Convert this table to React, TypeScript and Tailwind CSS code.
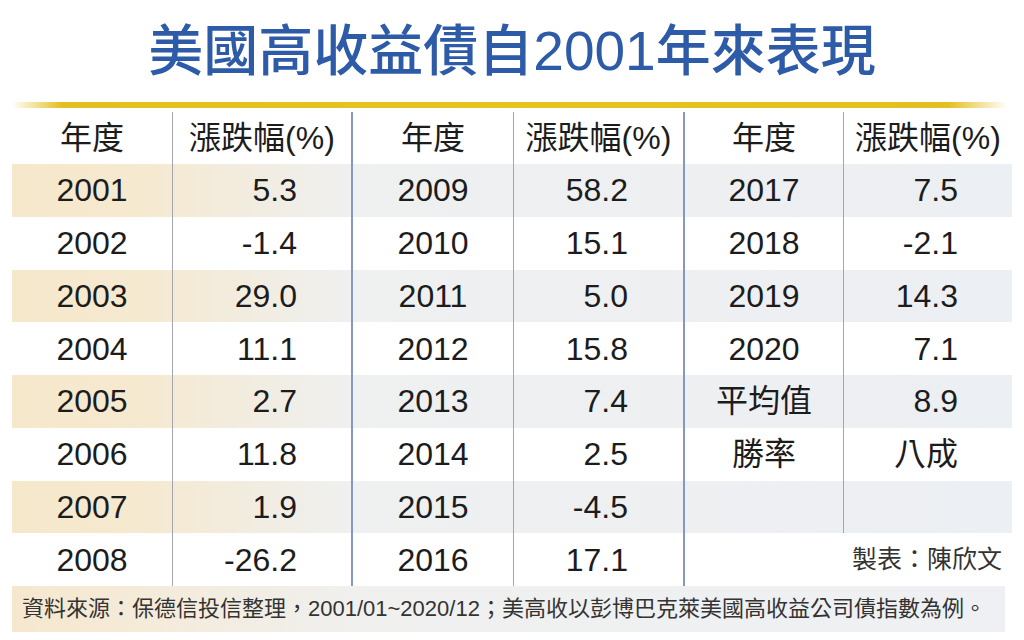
import React from 'react';

const fontStack = "font-['Liberation_Sans','Noto_Sans_CJK_TC',sans-serif]";

const bodyCols = [
  'w-[160px] justify-center',
  'w-[179px] justify-end pr-[54px] border-l border-[#a3a6ad]',
  'w-[162px] justify-center border-l-2 border-[#8597c6]',
  'w-[170px] justify-end pr-[55px] border-l border-[#a3a6ad]',
  'w-[160px] justify-center border-l-2 border-[#8597c6]',
  'w-[169px] justify-end pr-[54px] border-l border-[#a3a6ad]',
];

const headCols = [
  'w-[160px]',
  'w-[179px] border-l border-[#a3a6ad]',
  'w-[162px] border-l-2 border-[#8597c6]',
  'w-[170px] border-l border-[#a3a6ad]',
  'w-[160px] border-l-2 border-[#8597c6]',
  'w-[169px] border-l border-[#a3a6ad]',
];

const rows: string[][] = [
  ['2001', '5.3', '2009', '58.2', '2017', '7.5'],
  ['2002', '-1.4', '2010', '15.1', '2018', '-2.1'],
  ['2003', '29.0', '2011', '5.0', '2019', '14.3'],
  ['2004', '11.1', '2012', '15.8', '2020', '7.1'],
  ['2005', '2.7', '2013', '7.4', '平均值', '8.9'],
  ['2006', '11.8', '2014', '2.5', '勝率', '八成'],
  ['2007', '1.9', '2015', '-4.5', '', ''],
  ['2008', '-26.2', '2016', '17.1'],
];

const headers = ['年度', '漲跌幅(%)', '年度', '漲跌幅(%)', '年度', '漲跌幅(%)'];

export default function App() {
  return (
    <div className={`w-[1024px] h-[640px] bg-white overflow-hidden ${fontStack}`}>
      {/* title */}
      <div className="h-[102px] flex items-center justify-center">
        <h1 className="text-[55px] leading-none font-medium text-[#2e5ba8]">
          美國高收益債自2001年來表現
        </h1>
      </div>

      <div className="ml-[12px] mr-[16px] h-[6px] bg-[linear-gradient(to_right,rgba(230,195,30,0)_0%,#e3c021_5%,#e6c31d_50%,#e3c021_94%,rgba(230,195,30,0)_100%)]" />

      <div className="mt-[4px] ml-[12px] w-[1000px] text-[#1c1c1c]">
        {/* header */}
        <div className="flex h-[52px]">
          {headers.map((h, i) => (
            <div key={i} className={`${headCols[i]} flex items-center justify-center text-[32px] leading-none`}>
              {h}
            </div>
          ))}
        </div>

        {/* body */}
        {rows.map((row, r) => (
          <div
            key={r}
            className={`flex h-[52.75px] ${
              r % 2 === 0
                ? 'bg-[linear-gradient(to_right,#f6e8cb_0%,#f5e9d1_14%,#eff0f0_34%,#eceff3_100%)]'
                : 'bg-white'
            }`}
          >
            {row.map((c, i) => (
              <div key={i} className={`${bodyCols[i]} flex items-center text-[32px] leading-none`}>
                {c}
              </div>
            ))}
            {row.length === 4 && (
              <div className="w-[329px] border-l-2 border-[#8597c6] flex items-center justify-end pr-[10px] text-[25px] leading-none text-[#333]">
                製表：陳欣文
              </div>
            )}
          </div>
        ))}
      </div>

      {/* source */}
      <div className="ml-[12px] w-[993px] h-[46px] flex items-center pl-[10px] text-[22px] leading-none text-[#333] bg-[linear-gradient(to_right,#f6e8cf_0%,#f5ead6_10%,#f0f0ef_35%,#eef0f3_100%)]">
        資料來源：保德信投信整理，2001/01~2020/12；美高收以彭博巴克萊美國高收益公司債指數為例。
      </div>
    </div>
  );
}
